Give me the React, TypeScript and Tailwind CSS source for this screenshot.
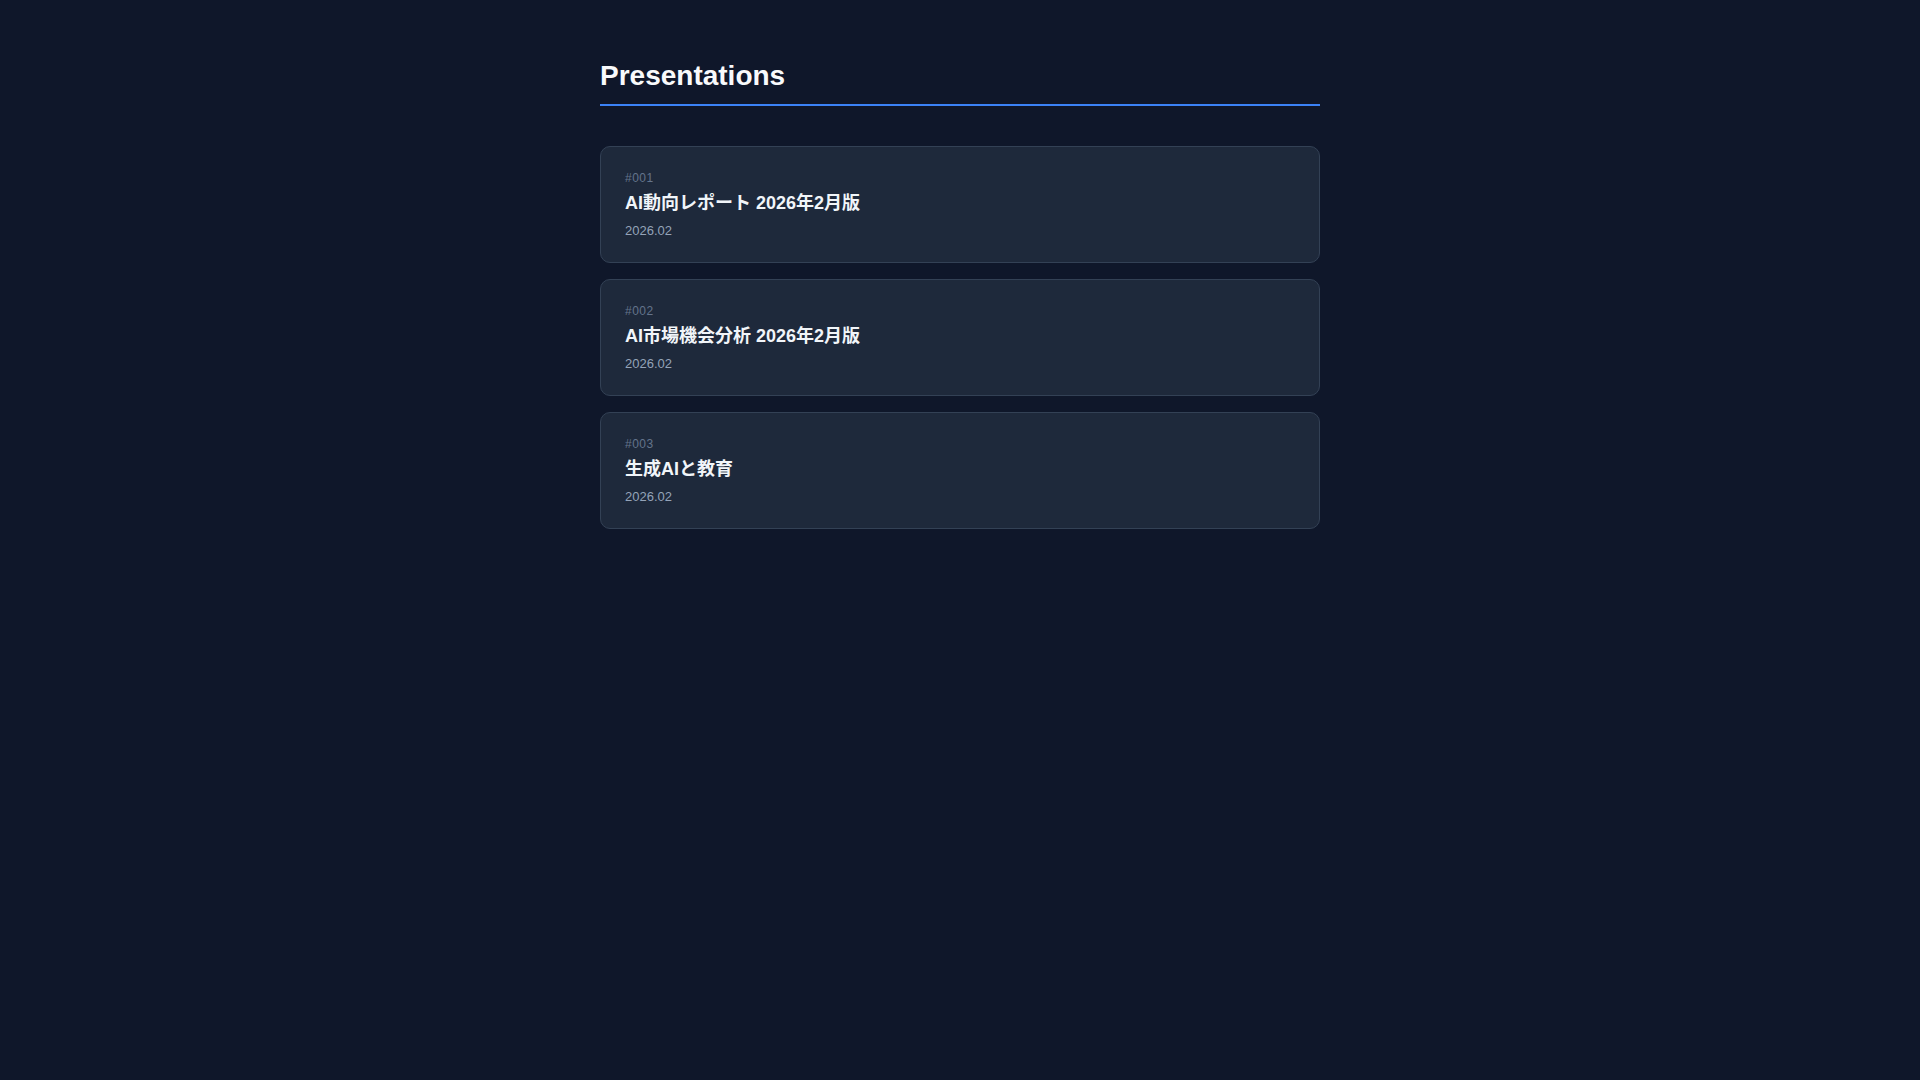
import React from "react";

const items = [
  { id: "#001", title: "AI動向レポート 2026年2月版", date: "2026.02" },
  { id: "#002", title: "AI市場機会分析 2026年2月版", date: "2026.02" },
  { id: "#003", title: "生成AIと教育", date: "2026.02" },
];

export default function App() {
  return (
    <div
      className="min-h-screen w-full bg-[#0f172a]"
      style={{ fontFamily: '"Liberation Sans", "Noto Sans CJK JP", sans-serif' }}
    >
      <div className="mx-auto w-[720px] pt-[59px]">
        <h1 className="border-b-2 border-[#3b82f6] pb-[11px] text-[28px] font-bold leading-[34px] text-[#f8fafc]">
          Presentations
        </h1>
        <div className="mt-10 flex flex-col gap-4">
          {items.map((it) => (
            <div
              key={it.id}
              className="rounded-[10px] border border-[#334155] bg-[#1e293b] px-6 pt-6 pb-[22px]"
            >
              <div className="text-[12px] leading-[14px] tracking-[0.5px] text-[#64748b]">{it.id}</div>
              <div className="mt-1.5 text-[18px] font-bold leading-[24px] text-[#f1f5f9]">
                {it.title}
              </div>
              <div className="mt-[7px] text-[13px] leading-[18px] text-[#94a3b8]">{it.date}</div>
            </div>
          ))}
        </div>
      </div>
    </div>
  );
}
